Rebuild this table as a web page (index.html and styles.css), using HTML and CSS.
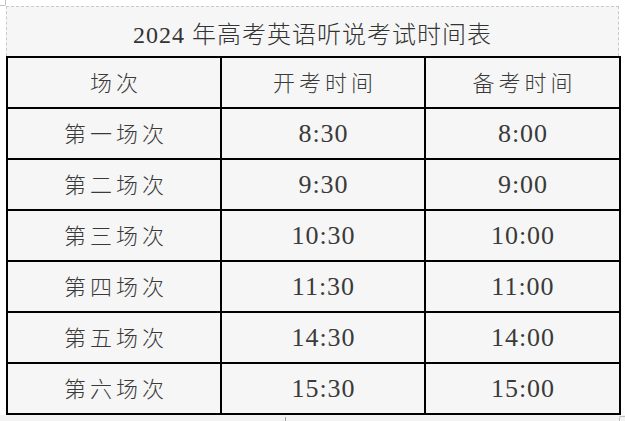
FILE: index.html
```html
<!DOCTYPE html>
<html lang="zh-CN">
<head>
<meta charset="utf-8">
<title>2024 年高考英语听说考试时间表</title>
<link rel="stylesheet" href="styles.css">
</head>
<body>
<div class="page">
  <span class="corner corner-tl"></span>
  <div class="sheet">
    <div class="title">2024 年高考英语听说考试时间表</div>
    <table class="schedule">
      <colgroup>
        <col class="c1"><col class="c2"><col class="c3">
      </colgroup>
      <tr><td class="zh">场次</td><td class="zh">开考时间</td><td class="zh">备考时间</td></tr>
      <tr><td class="zh">第一场次</td><td class="num">8:30</td><td class="num">8:00</td></tr>
      <tr><td class="zh">第二场次</td><td class="num">9:30</td><td class="num">9:00</td></tr>
      <tr><td class="zh">第三场次</td><td class="num">10:30</td><td class="num">10:00</td></tr>
      <tr><td class="zh">第四场次</td><td class="num">11:30</td><td class="num">11:00</td></tr>
      <tr><td class="zh">第五场次</td><td class="num">14:30</td><td class="num">14:00</td></tr>
      <tr><td class="zh">第六场次</td><td class="num">15:30</td><td class="num">15:00</td></tr>
    </table>
  </div>
  <div class="footer">
    <span class="tick"></span>
    <span class="corner corner-br"></span>
  </div>
</div>
</body>
</html>
```

FILE: styles.css
```css
html, body {
  margin: 0;
  padding: 0;
  background: #ffffff;
}

.page {
  position: relative;
  width: 625px;
  height: 421px;
  overflow: hidden;
}

.sheet {
  margin: 6px 0 0 6px;
  width: 613px;
  background: #f6f6f6;
}

.title {
  box-sizing: border-box;
  height: 50px;
  border-top: 1px dashed #c8c8c8;
  border-left: 1px dashed #c8c8c8;
  border-right: 1px dashed #c8c8c8;
  display: flex;
  align-items: center;
  justify-content: center;
  font-family: "Liberation Serif", "Noto Sans CJK SC", serif;
  font-size: 24px;
  font-weight: 300;
  color: #333333;
  letter-spacing: 1px;
  padding-top: 1px;
}

.schedule {
  width: 613px;
  border-collapse: collapse;
  table-layout: fixed;
  background: #f6f6f6;
}

.c1 { width: 214px; }
.c2 { width: 204px; }
.c3 { width: 195px; }

.schedule td {
  border: 2px solid #000000;
  height: 49px;
  padding: 0;
  text-align: center;
  vertical-align: middle;
  color: #3a3a3a;
}

.schedule td.zh {
  font-family: "Noto Sans CJK SC", sans-serif;
  font-size: 22px;
  letter-spacing: 4px;
  text-indent: 4px;
  font-weight: 300;
  height: 46px;
  padding-bottom: 3px;
}

.schedule td.num {
  font-family: "Liberation Serif", serif;
  font-size: 26px;
  letter-spacing: 1px;
  text-indent: 1px;
}

.footer {
  position: relative;
  height: 7px;
  background: #f3f3f3;
}

.tick {
  position: absolute;
  left: 285px;
  top: 2px;
  width: 1px;
  height: 6px;
  background: #a0a0a0;
}

.corner {
  position: absolute;
  width: 5px;
  height: 5px;
}

.corner-tl {
  left: 0;
  top: 0;
  border-right: 1px solid #c0c0c0;
  border-bottom: 1px solid #c0c0c0;
  border-bottom-right-radius: 2px;
}

.corner-br {
  left: 619px;
  top: 1px;
  border-left: 1px solid #c0c0c0;
  border-top: 1px solid #c0c0c0;
  border-top-left-radius: 2px;
}
```
